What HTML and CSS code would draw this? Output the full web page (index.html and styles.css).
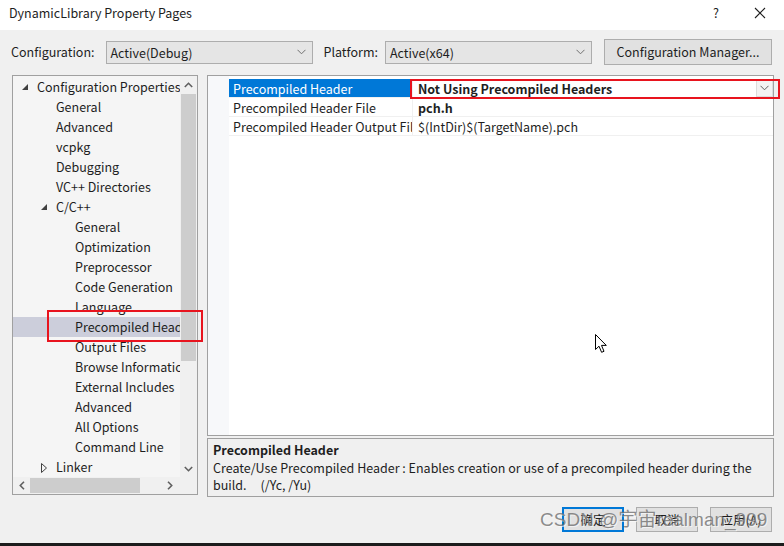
FILE: index.html
```html
<!DOCTYPE html>
<html>
<head>
<meta charset="utf-8">
<link rel="stylesheet" href="styles.css">
</head>
<body>
<div class="window">
  <div class="titlebar">
    <span class="title">DynamicLibrary Property Pages</span>
    <span class="help">?</span>
    <svg class="close" width="12" height="12" viewBox="0 0 12 12"><path d="M1 1 L11 11 M11 1 L1 11" stroke="#1e1e1e" stroke-width="1.1" fill="none"/></svg>
  </div>

  <div class="toolbar">
    <span class="lbl">Configuration:</span>
    <div class="combo"><span>Active(Debug)</span><svg width="9" height="6" viewBox="0 0 9 6"><path d="M0.5 0.8 L4.5 4.8 L8.5 0.8" stroke="#707070" fill="none"/></svg></div>
    <span class="lbl plat">Platform:</span>
    <div class="combo"><span>Active(x64)</span><svg width="9" height="6" viewBox="0 0 9 6"><path d="M0.5 0.8 L4.5 4.8 L8.5 0.8" stroke="#707070" fill="none"/></svg></div>
    <button class="btn cfgmgr">Configuration Manager...</button>
  </div>

  <div class="main">
    <div class="tree">
      <div class="tree-body">
        <ul class="tree-list">
          <li class="l0"><span class="exp"><svg width="7" height="7" viewBox="0 0 7 7"><polygon points="6,0 6,6 0,6" fill="#404040"/></svg></span>Configuration Properties</li>
          <li class="l1"><span class="exp"></span>General</li>
          <li class="l1"><span class="exp"></span>Advanced</li>
          <li class="l1"><span class="exp"></span>vcpkg</li>
          <li class="l1"><span class="exp"></span>Debugging</li>
          <li class="l1"><span class="exp"></span>VC++ Directories</li>
          <li class="l1"><span class="exp"><svg width="7" height="7" viewBox="0 0 7 7"><polygon points="6,0 6,6 0,6" fill="#404040"/></svg></span>C/C++</li>
          <li class="l2"><span class="exp"></span>General</li>
          <li class="l2"><span class="exp"></span>Optimization</li>
          <li class="l2"><span class="exp"></span>Preprocessor</li>
          <li class="l2"><span class="exp"></span>Code Generation</li>
          <li class="l2"><span class="exp"></span>Language</li>
          <li class="l2 sel"><span class="exp"></span>Precompiled Header</li>
          <li class="l2"><span class="exp"></span>Output Files</li>
          <li class="l2"><span class="exp"></span>Browse Information</li>
          <li class="l2"><span class="exp"></span>External Includes</li>
          <li class="l2"><span class="exp"></span>Advanced</li>
          <li class="l2"><span class="exp"></span>All Options</li>
          <li class="l2"><span class="exp"></span>Command Line</li>
          <li class="l1"><span class="exp"><svg class="hollow" width="7" height="10" viewBox="0 0 7 10"><polygon points="0.5,0.5 5.5,5 0.5,9.5" fill="none" stroke="#404040"/></svg></span>Linker</li>
        </ul>
        <div class="vscroll">
          <div class="sb-btn"><svg width="9" height="6" viewBox="0 0 9 6"><path d="M0.8 5 L4.5 1.3 L8.2 5" stroke="#606060" stroke-width="1.6" fill="none"/></svg></div>
          <div class="vtrack"><div class="vthumb"></div></div>
          <div class="sb-btn"><svg width="9" height="6" viewBox="0 0 9 6"><path d="M0.8 1 L4.5 4.7 L8.2 1" stroke="#606060" stroke-width="1.6" fill="none"/></svg></div>
        </div>
      </div>
      <div class="hscroll">
        <div class="sb-btn"><svg width="6" height="9" viewBox="0 0 6 9"><path d="M5 0.8 L1.3 4.5 L5 8.2" stroke="#606060" stroke-width="1.6" fill="none"/></svg></div>
        <div class="htrack"><div class="hthumb"></div></div>
        <div class="sb-btn"><svg width="6" height="9" viewBox="0 0 6 9"><path d="M1 0.8 L4.7 4.5 L1 8.2" stroke="#606060" stroke-width="1.6" fill="none"/></svg></div>
        <div class="corner"></div>
      </div>
    </div>

    <div class="right">
      <div class="grid">
        <div class="gutter"></div>
        <div class="rows">
          <div class="row selrow">
            <div class="name">Precompiled Header</div>
            <div class="value bold"><span>Not Using Precompiled Headers</span>
              <span class="dd"><svg width="9" height="6" viewBox="0 0 9 6"><path d="M0.5 0.8 L4.5 4.8 L8.5 0.8" stroke="#606060" fill="none"/></svg></span>
            </div>
          </div>
          <div class="row">
            <div class="name">Precompiled Header File</div>
            <div class="value bold">pch.h</div>
          </div>
          <div class="row">
            <div class="name">Precompiled Header Output File</div>
            <div class="value">$(IntDir)$(TargetName).pch</div>
          </div>
        </div>
      </div>
      <div class="desc">
        <div class="desc-title">Precompiled Header</div>
        <div class="desc-line">Create/Use Precompiled Header : Enables creation or use of a precompiled header during the</div>
        <div class="desc-line">build.     (/Yc, /Yu)</div>
      </div>
    </div>
  </div>

  <div class="footer">
    <button class="btn dlg default">确定</button>
    <button class="btn dlg">取消</button>
    <button class="btn dlg">应用(A)</button>
  </div>
  <div class="taskbar"></div>

  <div class="redbox rb-tree"></div>
  <div class="redbox rb-grid"></div>
  <div class="watermark">CSDN @宇宙realman_999</div>
  <svg class="cursor" width="13" height="20" viewBox="0 0 13 20"><path d="M0.5 0.5 L0.5 15.5 L4 12.2 L6.6 18.3 L9 17.3 L6.5 11.4 L11.3 11.4 Z" fill="#fff" stroke="#000" stroke-width="1" stroke-linejoin="miter"/></svg>
</div>
</body>
</html>
```

FILE: styles.css
```css
* { box-sizing: border-box; }
html, body { margin: 0; padding: 0; }
body {
  width: 784px;
  height: 546px;
  overflow: hidden;
  background: #f0f0f0;
  font-family: "Noto Sans CJK SC", "Noto Sans", sans-serif;
  font-size: 12.5px;
  color: #1e1e1e;
}
.window {
  position: relative;
  width: 784px;
  height: 546px;
  display: flex;
  flex-direction: column;
}
.titlebar {
  height: 30px;
  background: #fff;
  display: flex;
  align-items: flex-start;
  padding: 4px 0 0 9px;
  line-height: 18px;
}
.title { flex: 1; }
.help { margin-right: 35px; line-height: 18px; }
.close { margin: 3px 18px 0 0; }

.toolbar {
  height: 46px;
  display: flex;
  align-items: center;
  padding-left: 11px;
  padding-bottom: 1px;
}
.lbl { margin-right: 11px; line-height: 18px; }
.lbl.plat { margin-left: 11px; margin-right: 7px; }
.combo {
  width: 207px;
  height: 23px;
  background: #e5e5e5;
  border: 1px solid #adadad;
  display: flex;
  align-items: center;
  justify-content: space-between;
  padding: 0 6px 0 4px;
  line-height: 18px;
}
.combo span { padding-top: 1px; }
.btn {
  font-family: inherit;
  font-size: 12.5px;
  color: #1e1e1e;
  background: #e1e1e1;
  border: 1px solid #adadad;
  padding: 0;
  line-height: 18px;
}
.cfgmgr {
  margin-left: 12px;
  width: 168px;
  height: 26px;
}

.main {
  display: flex;
  padding-left: 12px;
  gap: 9px;
  height: 422px;
}
.tree {
  width: 186px;
  height: 420px;
  border: 1px solid #a0a0a0;
  background: #f5f5f5;
  display: flex;
  flex-direction: column;
}
.tree-body {
  flex: 1;
  display: flex;
  min-height: 0;
}
.tree-list {
  list-style: none;
  margin: 0;
  padding: 1px 0 0 0;
  flex: 1;
  overflow: hidden;
  white-space: nowrap;
}
.tree-list li {
  height: 20px;
  line-height: 20px;
  display: flex;
  align-items: center;
}
.exp {
  width: 17px;
  height: 20px;
  flex: none;
  display: flex;
  align-items: center;
  padding-left: 2px;
}
.exp svg { margin-top: 1px; }
.l0 { padding-left: 7px; }
.l1 { padding-left: 26px; }
.l2 { padding-left: 45px; }
.tree-list li.sel { background: #cccedb; }

.vscroll {
  width: 17px;
  flex: none;
  background: #f0f0f0;
  display: flex;
  flex-direction: column;
}
.sb-btn {
  width: 17px;
  height: 17px;
  flex: none;
  display: flex;
  align-items: center;
  justify-content: center;
}
.vtrack { flex: 1; padding: 1px 1px; }
.vthumb { height: 267px; background: #cdcdcd; }
.hscroll {
  height: 17px;
  display: flex;
  background: #f0f0f0;
}
.htrack { width: 131px; padding: 1px 0; }
.hthumb { width: 110px; height: 15px; background: #cdcdcd; }
.corner { width: 17px; background: #f0f0f0; }

.right {
  width: 567px;
  display: flex;
  flex-direction: column;
  gap: 2px;
}
.grid {
  height: 361px;
  border: 1px solid #a0a0a0;
  background: #fff;
  display: flex;
}
.gutter { width: 21px; background: #f7f8fa; }
.rows { flex: 1; padding-top: 3px; }
.row {
  height: 19px;
  display: flex;
  border-bottom: 1px solid #f0f0f0;
  line-height: 18px;
}
.name {
  width: 184px;
  padding: 1px 0 0 4px;
  white-space: nowrap;
  overflow: hidden;
  border-right: 1px solid #f0f0f0;
}
.selrow .name { background: #0078d7; color: #fff; }
.value {
  flex: 1;
  padding: 1px 0 0 5px;
  display: flex;
  justify-content: space-between;
  align-items: center;
  white-space: nowrap;
}
.bold { font-weight: bold; }
.dd {
  width: 17px;
  height: 17px;
  margin-top: -1px;
  border: 1px solid #dcdcdc;
  background: #f3f3f3;
  display: flex;
  align-items: center;
  justify-content: center;
}
.desc {
  height: 59px;
  border: 1px solid #a0a0a0;
  background: #f0f0f0;
  padding: 2px 0 0 5px;
}
.desc-title { font-weight: bold; line-height: 18px; }
.desc-line { line-height: 17px; white-space: pre; }

.footer {
  height: 46px;
  display: flex;
  justify-content: flex-end;
  align-items: flex-start;
  gap: 12px;
  padding: 10px 12px 0 0;
}
.dlg { width: 62px; height: 25px; }
.dlg.default { border: 2px solid #0078d7; }
.taskbar { height: 3px; background: #1c1c1c; }

.redbox {
  position: absolute;
  border: 2px solid #e8141e;
}
.rb-tree { left: 47px; top: 310px; width: 156px; height: 32px; }
.rb-grid { left: 410px; top: 79px; width: 370px; height: 20px; }
.watermark {
  position: absolute;
  z-index: 5;
  left: 540px;
  top: 507px;
  font-family: "Liberation Sans", "Noto Sans CJK SC", sans-serif;
  font-size: 19px;
  line-height: 26px;
  color: rgba(105, 105, 105, 0.75);
  text-shadow: 1px 1px 0 rgba(255,255,255,0.6);
  white-space: nowrap;
}
.cursor { position: absolute; left: 595px; top: 334px; }
```
